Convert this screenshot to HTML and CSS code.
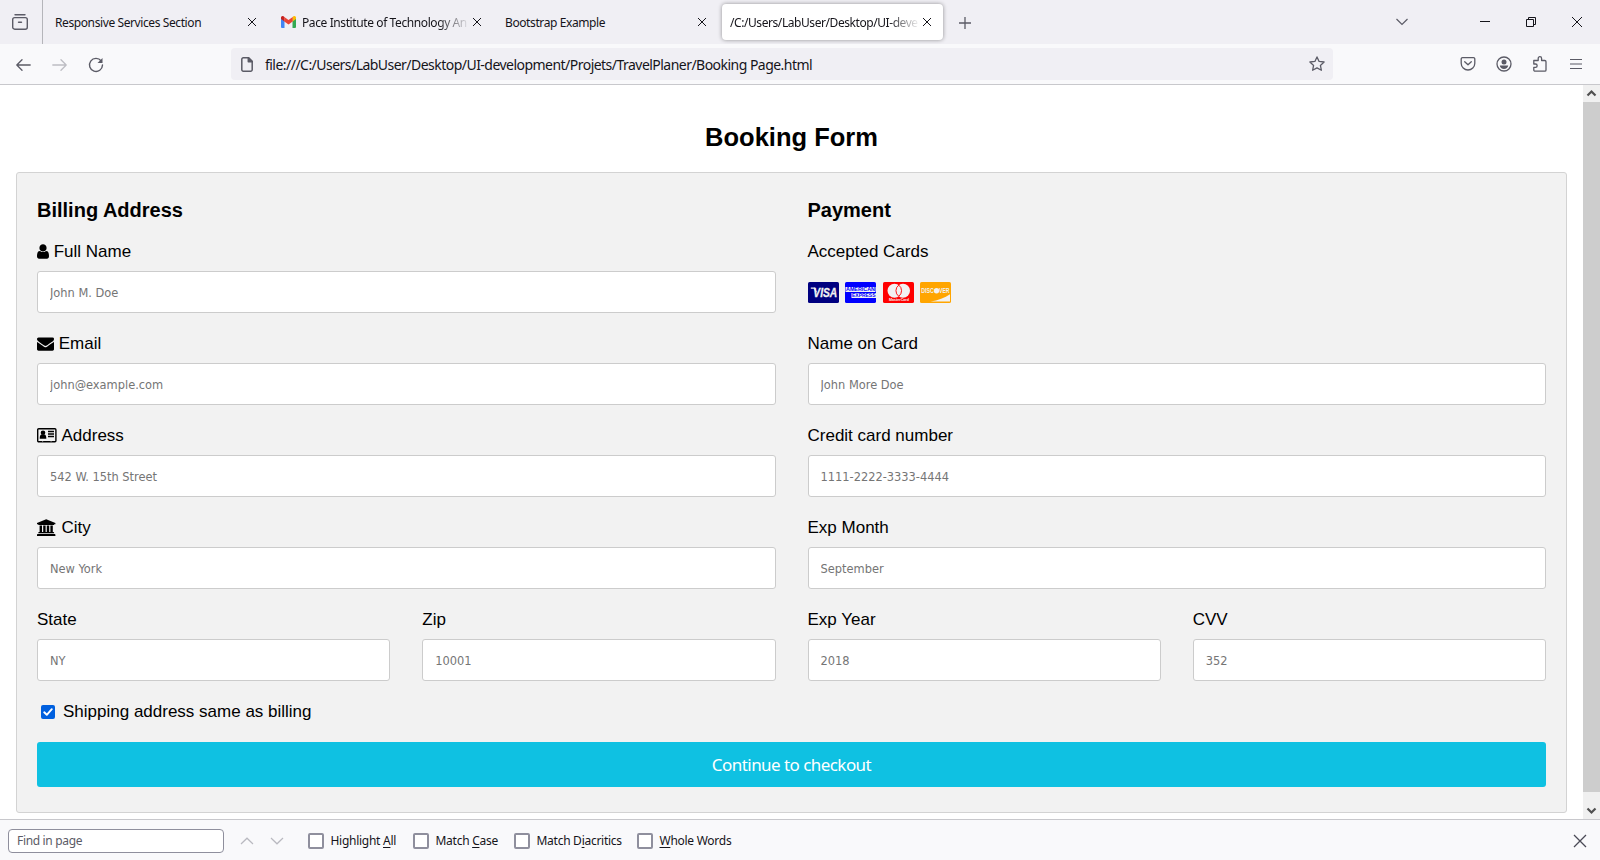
FILE: index.html
```html
<!DOCTYPE html>
<html lang="en">
<head>
<meta charset="utf-8">
<title>Booking Page</title>
<link rel="stylesheet" href="styles.css">
</head>
<body>
<svg class="defs" width="0" height="0">
  <symbol id="close" viewBox="0 0 10 10"><path d="M1 1l8 8M9 1L1 9" fill="none" stroke="currentColor" stroke-width="1"/></symbol>
</svg>

<header class="tabbar">
  <div class="tabbar-view">
    <svg width="18" height="18" viewBox="0 0 18 18" fill="none" stroke="#5b5b66" stroke-width="1.4" stroke-linecap="round"><path d="M4 1.7h10"/><rect x="1.7" y="4.6" width="14.6" height="11.6" rx="2"/><path d="M7.5 9.2h3"/></svg>
  </div>
  <div class="tabs">
    <div class="tab"><span class="tab-title">Responsive Services Section</span><svg class="x"><use href="#close"/></svg></div>
    <div class="tab tab-icon">
      <svg class="gmail" width="15" height="12" viewBox="0 0 15 12"><path d="M0 2v9a1 1 0 0 0 1 1h2.5V4.5z" fill="#4285f4"/><path d="M15 2v9a1 1 0 0 1-1 1h-2.500V4.500z" fill="#34a853"/><path d="M11.500 1v4.500L15 3V1.600C15 .2 13.400-.5 12.300.4z" fill="#fbbc04"/><path d="M3.500 1v4.500L0 3V1.600C0 .2 1.600-.5 2.700.4z" fill="#c5221f"/><path d="M3.300.9l4.200 3.200L11.700.9v4.500L7.500 8.600 3.300 5.400z" fill="#ea4335"/></svg>
      <span class="tab-title fade">Pace Institute of Technology An</span><svg class="x"><use href="#close"/></svg>
    </div>
    <div class="tab"><span class="tab-title">Bootstrap Example</span><svg class="x"><use href="#close"/></svg></div>
    <div class="tab active"><span class="tab-title fade">/C:/Users/LabUser/Desktop/UI-deve</span><svg class="x"><use href="#close"/></svg></div>
  </div>
  <svg class="newtab" width="12" height="12" viewBox="0 0 12 12"><path d="M6 0v12M0 6h12" stroke="#5b5b66" stroke-width="1.3"/></svg>
  <div class="window-tools">
    <svg class="alltabs" width="12" height="8" viewBox="0 0 12 8" fill="none" stroke="#5b5b66" stroke-width="1.2"><path d="M.5 1L6 6.500 11.500 1"/></svg>
    <svg class="minimize" width="10" height="10" viewBox="0 0 10 10"><path d="M0 4.500h10" stroke="#15141a"/></svg>
    <svg class="restore" width="10" height="10" viewBox="0 0 10 10" fill="none" stroke="#15141a"><path d="M.5 2.500h7v7h-7zM2.500 2.500v-2h7v7h-2"/></svg>
    <svg width="10" height="10" viewBox="0 0 10 10"><path d="M0 0l10 10M10 0L0 10" stroke="#15141a"/></svg>
  </div>
</header>

<nav class="toolbar">
  <div class="nav-buttons">
    <svg width="15" height="12" viewBox="0 0 15 12" fill="none" stroke="#5b5b66" stroke-width="1.3" stroke-linecap="round" stroke-linejoin="round"><path d="M6 .8L.8 6 6 11.200M.8 6h13.400"/></svg>
    <svg width="15" height="12" viewBox="0 0 15 12" fill="none" stroke="#bdbdc3" stroke-width="1.3" stroke-linecap="round" stroke-linejoin="round"><path d="M9 .8L14.200 6 9 11.200M.8 6h13.400"/></svg>
    <svg width="16" height="16" viewBox="0 0 16 16" fill="none" stroke="#5b5b66" stroke-width="1.4" stroke-linecap="round"><path d="M13.200 4A6.500 6.500 0 1 0 14.500 8"/><path d="M14.500 1v5h-5z" fill="#5b5b66" stroke="none"/></svg>
  </div>
  <div class="urlbar">
    <svg width="12" height="15" viewBox="0 0 12 15" fill="none" stroke="#5b5b66" stroke-width="1.5" stroke-linejoin="round"><path d="M2.300.8h5.400l3.500 3.500v8.400a1.500 1.500 0 0 1-1.500 1.500H2.300a1.500 1.500 0 0 1-1.500-1.500V2.300A1.500 1.500 0 0 1 2.300.8z"/><path d="M7.300.8v3.900h3.900z" fill="#5b5b66"/></svg>
    <span class="url">file:///C:/Users/LabUser/Desktop/UI-development/Projets/TravelPlaner/Booking Page.html</span>
    <svg width="16" height="16" viewBox="0 0 16 16" fill="none" stroke="#5b5b66" stroke-width="1.300" stroke-linejoin="round"><path d="M8 .9l2.100 4.500 5 .6-3.700 3.400 1 4.900L8 11.900l-4.400 2.400 1-4.900L.9 6l5-.6z"/></svg>
  </div>
  <div class="toolbar-actions">
    <svg width="16" height="16" viewBox="0 0 16 16" fill="none" stroke="#5b5b66" stroke-width="1.300" stroke-linecap="round" stroke-linejoin="round"><path d="M2.500 1.700h11a1.300 1.300 0 0 1 1.300 1.300v4.200a6.800 6.800 0 0 1-13.600 0V3a1.300 1.300 0 0 1 1.300-1.300z"/><path d="M4.700 5.700L8 8.800l3.300-3.100"/></svg>
    <svg width="16" height="16" viewBox="0 0 16 16"><circle cx="8" cy="8" r="7" fill="none" stroke="#5b5b66" stroke-width="1.300"/><circle cx="8" cy="6" r="2.500" fill="#5b5b66"/><path d="M3.800 9.500h8.400c0 2-2 3.400-4.200 3.400s-4.200-1.400-4.200-3.400z" fill="#5b5b66"/></svg>
    <svg width="16" height="16" viewBox="0 0 16 16" fill="none" stroke="#5b5b66" stroke-width="1.300" stroke-linejoin="round"><path d="M1.800 4.500h4.400V2.400a1.700 1.700 0 0 1 3.400 0v2.100h3.200a1.200 1.200 0 0 1 1.200 1.200v8.200a1.200 1.200 0 0 1-1.200 1.200H3a1.200 1.200 0 0 1-1.200-1.200v-2.600h1.700a1.600 1.600 0 0 0 0-3.300H1.800z"/></svg>
    <svg width="16" height="16" viewBox="0 0 16 16"><path d="M2 3.500h12M2 8h12M2 12.500h12" stroke="#5b5b66" stroke-width="1.200"/></svg>
  </div>
</nav>

<div class="viewport">
  <main class="page">
    <h2>Booking Form</h2>
    <form class="container">
      <div class="row">
        <section class="col">
          <h3>Billing Address</h3>
          <label for="fname"><svg width="12" height="17" viewBox="256 0 1280 1792"><path d="M1536 1399q0 109-62.500 187t-150.500 78h-854q-88 0-150.500-78t-62.500-187q0-85 8.500-160.500t31.500-152 58.500-131 94-89 134.500-34.500q131 128 313 128t313-128q76 0 134.500 34.500t94 89 58.500 131 31.500 152 8.500 160.500zm-256-887q0 159-112.500 271.500t-271.500 112.500-271.500-112.500-112.500-271.500 112.500-271.500 271.500-112.500 271.500 112.500 112.500 271.500z"/></svg>Full Name</label>
          <input type="text" id="fname" placeholder="John M. Doe">
          <label for="email"><svg width="17" height="17" viewBox="0 0 1792 1792"><path d="M1792 710v794q0 66-47 113t-113 47h-1472q-66 0-113-47t-47-113v-794q44 49 101 87 362 246 497 345 57 42 92.500 65.500t94.500 48 110 24.500h2q51 0 110-24.500t94.500-48 92.500-65.500q170-123 498-345 57-39 100-87zm0-294q0 79-49 151t-122 123q-376 261-468 325-10 7-42.500 31t-54 38.800-52 32.200-57.500 27-50 9h-2q-23 0-50-9t-57.500-27-52-32.200-54-38.800-42.500-31q-91-64-262-182.500t-205-142.500q-62-42-117-115.500t-55-136.500q0-78 41.500-130t118.500-52h1472q65 0 112.500 47t47.500 113z"/></svg>Email</label>
          <input type="text" id="email" placeholder="john@example.com">
          <label for="adr"><svg class="wide" width="20" height="17" viewBox="0 0 20 17"><rect x=".7" y="1.700" width="18.200" height="13.100" rx="1" fill="none" stroke="#000" stroke-width="1.400"/><circle cx="6" cy="5.800" r="2.300"/><path d="M2.700 11.700c0-2.700.8-4.100 1.900-4.100h2.800c1.100 0 1.900 1.400 1.900 4.100z"/><path d="M11 4.500h6M11 7h6M11 9.500h6" stroke="#000" stroke-width="1.300"/><path d="M5 14h1.200M13.500 14h1.200" stroke="#f2f2f2" stroke-width=".8"/></svg>Address</label>
          <input type="text" id="adr" placeholder="542 W. 15th Street">
          <label for="city"><svg class="wide" width="20" height="18" viewBox="0 0 20 18"><path d="M9.200.3l9.200 3.700v1.200h-1.300v.7H1.300v-.7H0V4zM2.600 6.500H5v6.600h1.200V6.500h2.400v6.600h1.200V6.500h2.400v6.600h1.200V6.500h2.400v6.600h.8l.5.500v.7H1.300v-.7l.5-.5h.8zM.6 15h17.200l.6.600v1.300H0v-1.300z"/></svg>City</label>
          <input type="text" id="city" placeholder="New York">
          <div class="row">
            <div class="col"><label for="state">State</label><input type="text" id="state" placeholder="NY"></div>
            <div class="col"><label for="zip">Zip</label><input type="text" id="zip" placeholder="10001"></div>
          </div>
        </section>
        <section class="col">
          <h3>Payment</h3>
          <label>Accepted Cards</label>
          <div class="cards">
            <svg width="31" height="21" viewBox="0 0 31 21"><rect width="31" height="21" rx="1.600" fill="navy"/><path d="M2.800 6.200h3.700l1.800 4" fill="none" stroke="#f2f2f2" stroke-width="1.300"/><text x="5.300" y="14.900" class="visa" textLength="24" lengthAdjust="spacingAndGlyphs">VISA</text></svg>
            <svg width="31" height="21" viewBox="0 0 31 21"><rect width="31" height="21" rx="1.600" fill="blue"/><path d="M.5 5h30v5h-30zM6.500 11h24.500v5h-24.500z" fill="#f2f2f2"/><text x="1" y="9.400" class="amex" textLength="29" lengthAdjust="spacingAndGlyphs">AMERICAN</text><text x="7" y="15.400" class="amex" textLength="23.500" lengthAdjust="spacingAndGlyphs">EXPRESS</text></svg>
            <svg width="31" height="21" viewBox="0 0 31 21"><rect width="31" height="21" rx="1.600" fill="red"/><circle cx="11.500" cy="8.700" r="7" fill="#f2f2f2"/><circle cx="20" cy="8.700" r="7" fill="#f2f2f2"/><path d="M15.750 3.100a7 7 0 0 1 0 11.200a7 7 0 0 1 0-11.200z" fill="#f2f2f2" stroke="red" stroke-width=".9"/><text x="6" y="19" class="master" textLength="20" lengthAdjust="spacingAndGlyphs">MasterCard</text></svg>
            <svg width="31" height="21" viewBox="0 0 31 21"><rect width="31" height="21" rx="1.600" fill="orange"/><path d="M30 12.200v7.300H10.500C18 18.300 25 15.700 30 12.200z" fill="#f2f2f2"/><text x="1.300" y="11" class="discover" textLength="12.500" lengthAdjust="spacingAndGlyphs">DISC</text><circle cx="16.500" cy="8.700" r="2.700" fill="#f2f2f2"/><text x="19" y="11" class="discover" textLength="10.500" lengthAdjust="spacingAndGlyphs">VER</text></svg>
          </div>
          <label for="cname">Name on Card</label>
          <input type="text" id="cname" placeholder="John More Doe">
          <label for="ccnum">Credit card number</label>
          <input type="text" id="ccnum" placeholder="1111-2222-3333-4444">
          <label for="expmonth">Exp Month</label>
          <input type="text" id="expmonth" placeholder="September">
          <div class="row">
            <div class="col"><label for="expyear">Exp Year</label><input type="text" id="expyear" placeholder="2018"></div>
            <div class="col"><label for="cvv">CVV</label><input type="text" id="cvv" placeholder="352"></div>
          </div>
        </section>
      </div>
      <label class="same"><svg width="14" height="14" viewBox="0 0 14 14"><rect width="14" height="14" rx="2" fill="#0060df"/><path d="M3.200 7.300l2.600 2.500 5-5.600" fill="none" stroke="#fff" stroke-width="1.900" stroke-linecap="round" stroke-linejoin="round"/></svg>Shipping address same as billing</label>
      <button type="button" class="btn">Continue to checkout</button>
    </form>
  </main>
  <aside class="scrollbar">
    <svg width="17" height="17" viewBox="0 0 17 17"><path d="M4.500 10.500l4-4 4 4" fill="none" stroke="#505050" stroke-width="2.200"/></svg>
    <div class="thumb"></div>
    <svg width="17" height="17" viewBox="0 0 17 17"><path d="M4.500 6.500l4 4 4-4" fill="none" stroke="#505050" stroke-width="2.200"/></svg>
  </aside>
</div>

<footer class="findbar">
  <input class="find" type="text" placeholder="Find in page">
  <svg class="up" width="14" height="8" viewBox="0 0 14 8"><path d="M1 7l6-5.800L13 7" fill="none" stroke="#b9b9c0" stroke-width="1.200"/></svg>
  <svg class="down" width="14" height="8" viewBox="0 0 14 8"><path d="M1 1l6 5.800L13 1" fill="none" stroke="#b9b9c0" stroke-width="1.200"/></svg>
  <div class="options">
    <span class="opt hl"><i></i><span>Highlight <u>A</u>ll</span></span>
    <span class="opt mc"><i></i><span>Match <u>C</u>ase</span></span>
    <span class="opt md"><i></i><span>Match D<u>i</u>acritics</span></span>
    <span class="opt"><i></i><span><u>W</u>hole Words</span></span>
  </div>
  <svg class="close-find" width="14" height="14" viewBox="0 0 14 14"><path d="M1 1l12 12M13 1L1 13" stroke="#4a4a55" stroke-width="1.300"/></svg>
</footer>
</body>
</html>
```
FILE: styles.css
```css
* { box-sizing: border-box; }
body {
  margin: 0;
  width: 1600px;
  height: 860px;
  overflow: hidden;
  display: flex;
  flex-direction: column;
  background: #fff;
  color: #15141a;
  font: 12px/16px "Noto Sans", "Open Sans", sans-serif;
}
svg { display: block; flex: none; }
.defs { position: absolute; }

/* Tab strip */
.tabbar { height: 44px; flex: none; display: flex; align-items: center; background: #f0eff4; }
.tabbar-view { width: 43px; height: 44px; padding: 13px 0 0 11px; border-right: 1px solid #b5b5ba; }
.tabs { display: flex; gap: 4px; margin-left: 4px; }
.tab { width: 221px; height: 36px; display: flex; align-items: center; padding: 0 11px 0 8px; border-radius: 4px; }
.tab.active { background: #fff; box-shadow: 0 0 4px rgba(0, 0, 0, .4); }
.tab-title { flex: 1; min-width: 0; padding-top: 2px; overflow: hidden; white-space: nowrap; letter-spacing: -.4px; }
.fade { -webkit-mask-image: linear-gradient(to left, transparent, #000 32px); mask-image: linear-gradient(to left, transparent, #000 32px); }
.active .fade { letter-spacing: -.43px; }
.x { width: 10px; height: 10px; margin-left: 2px; }
.gmail { margin: 0 6px 0 1px; }
.newtab { margin: 1px 0 0 16px; }
.window-tools { margin-left: auto; display: flex; align-items: center; padding-right: 18px; }
.alltabs { margin-right: 72px; }
.minimize, .restore { margin-right: 36px; }

/* Navigation toolbar */
.toolbar { height: 41px; flex: none; display: flex; align-items: center; padding: 0 16px; background: #f9f9fb; border-bottom: 1px solid #c8c8cc; }
.nav-buttons { width: 215px; display: flex; align-items: center; gap: 21px; padding-top: 1px; }
.urlbar { width: 1102px; height: 32px; display: flex; align-items: center; padding: 0 8px 0 10px; background: #f0eff4; border-radius: 4px; }
.url { flex: 1; margin-left: 12px; padding-top: 1px; font-size: 14px; letter-spacing: -.53px; line-height: 20px; white-space: nowrap; }
.toolbar-actions { margin-left: auto; display: flex; gap: 20px; }

/* Page content */
.viewport { flex: 1; min-height: 0; display: flex; }
.page { flex: 1; padding: 0 16px; font: 17px/20px "Liberation Sans", Arial, sans-serif; color: #000; }
h2 { margin: 38px 0 20px; font-size: 25.5px; line-height: 29px; text-align: center; }
h3 { margin: 21px 0 19px; font-size: 20px; line-height: 23px; }
.container { height: 641px; margin: 0; padding: 5px 20px 15px; background: #f2f2f2; border: 1px solid #d3d3d3; border-radius: 3px; }
.row { display: flex; margin: 0 -16px; }
.col { flex: 1; min-width: 0; padding: 0 16px; }
label { display: flex; height: 21px; padding-top: 1px; margin-bottom: 9px; white-space: nowrap; }
label svg { margin: 1px 4.700px 0 0; }
label .wide { margin-right: 4.500px; }
input { display: block; outline: none; }
.container input { width: 100%; height: 42px; margin: 0 0 20px; padding: 12px; border: 1px solid #ccc; border-radius: 3px; background: #fff; font: 12.700px "DejaVu Sans Condensed", "DejaVu Sans", sans-serif; }
input::placeholder { color: #757575; opacity: 1; }
.cards { height: 42px; margin-bottom: 20px; padding-top: 11px; display: flex; gap: 6.500px; }
.cards text { font-family: "Liberation Sans", Arial, sans-serif; font-weight: bold; fill: #f2f2f2; }
.cards .visa { font-size: 12px; font-style: italic; stroke: #f2f2f2; stroke-width: .3px; }
.cards .amex { font-size: 5.500px; fill: blue; }
.cards .master { font-size: 3.500px; }
.cards .discover { font-size: 6.500px; }
.same { margin: 0 0 20px 4px; }
.same svg { margin: 3px 8px 0 0; }
.btn { display: block; width: 100%; height: 45px; padding: 0; border: 0; border-radius: 3px; background: #0fc1e2; color: #fff; font: 17px "Noto Sans", sans-serif; letter-spacing: -.55px; }

.scrollbar { width: 17px; display: flex; flex-direction: column; background: #f0f0f0; }
.thumb { height: 690px; background: #cdcdcd; margin-bottom: auto; }

/* Find bar */
.findbar { height: 41px; flex: none; display: flex; align-items: center; padding: 1px 13px 0 8px; background: #f9f9fb; border-top: 1px solid #c8c8cc; }
.find { width: 216px; height: 24px; padding: 0 8px; border: 1px solid #8f8f9d; border-radius: 4px; background: #fff; font: 12px "Noto Sans", sans-serif; letter-spacing: -.33px; }
.find::placeholder { color: #5b5b66; }
.up { margin-left: 16px; }
.down { margin-left: 16px; }
.options { display: flex; margin-left: 24px; letter-spacing: -.27px; }
.opt { display: flex; align-items: center; white-space: nowrap; }
.opt i { width: 16px; height: 16px; margin-right: 6.500px; border: 2px solid #8f8f9d; border-radius: 2px; background: #fff; }
.opt u { text-underline-offset: 2px; }
.hl { width: 105px; }
.mc { width: 101px; }
.md { width: 123px; }
.close-find { margin-left: auto; }
```
